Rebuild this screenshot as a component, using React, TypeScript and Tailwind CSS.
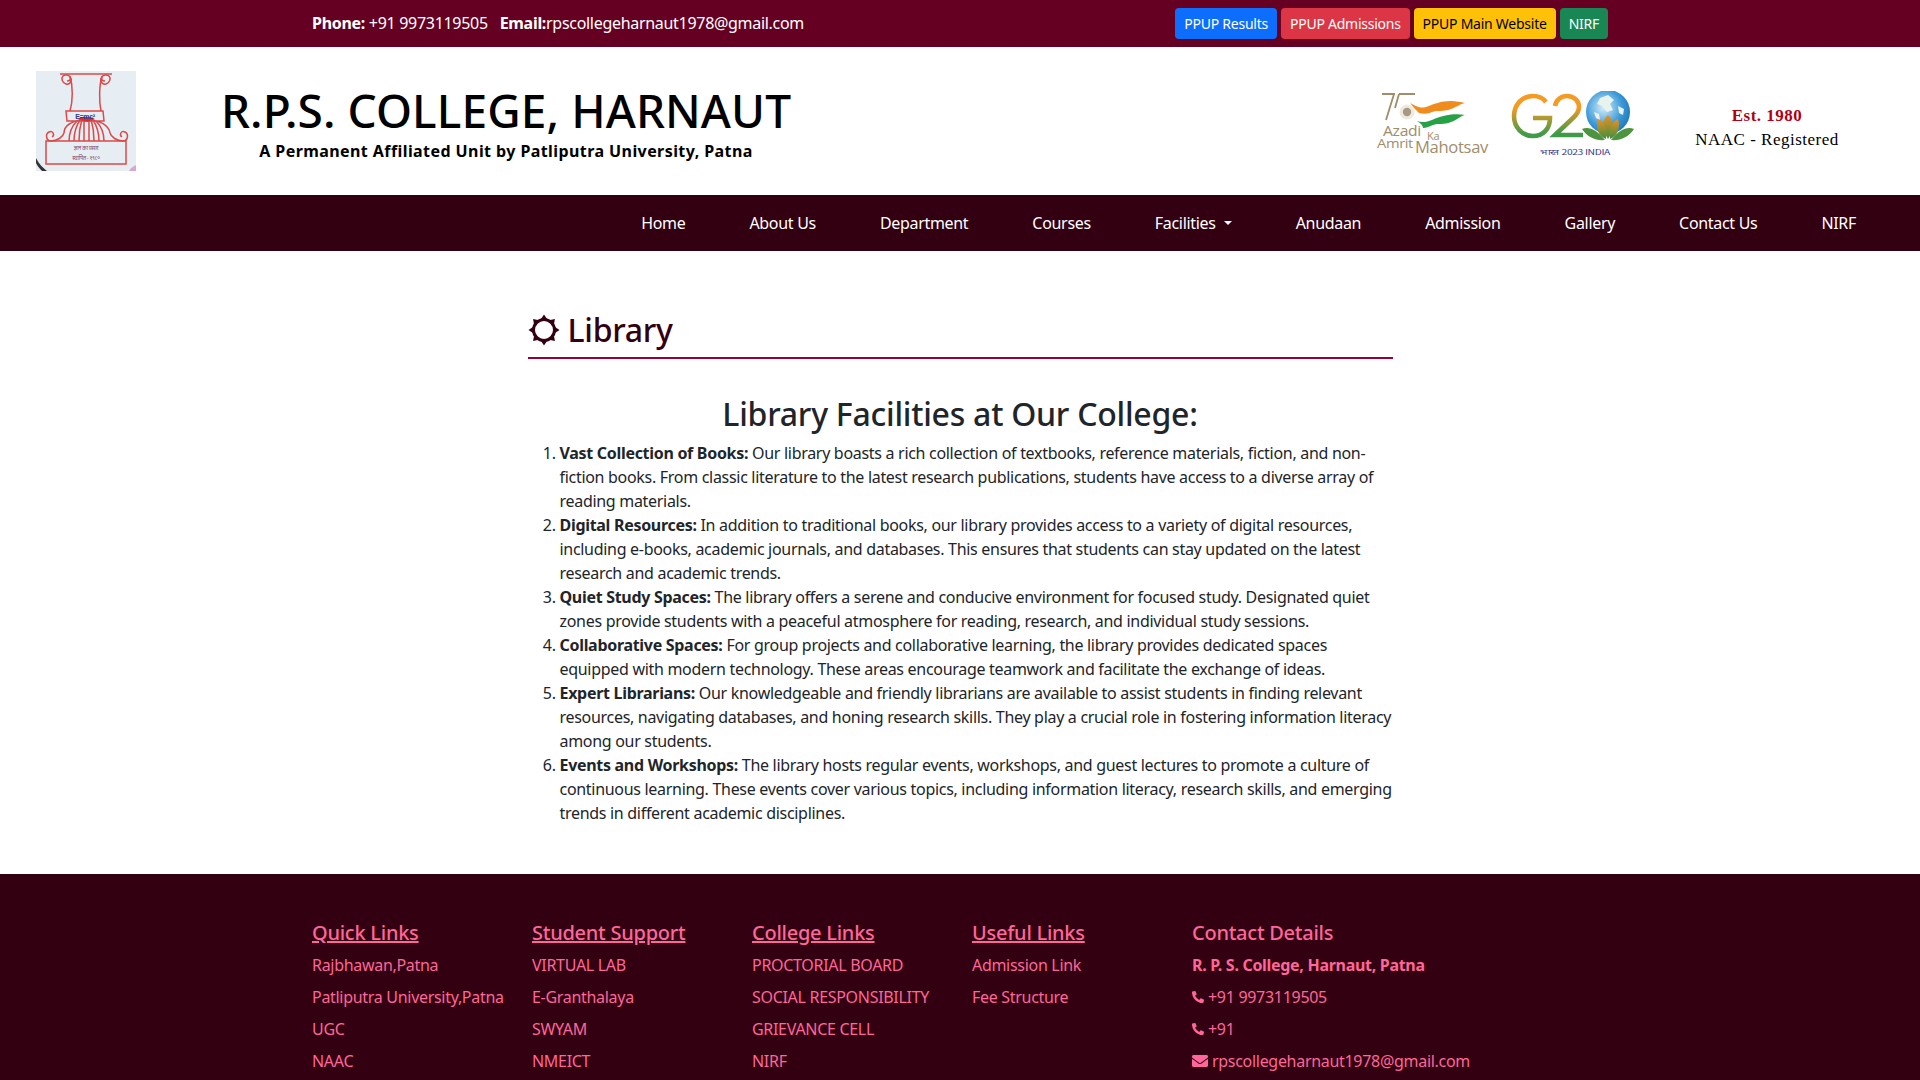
import React from "react";
import { FaPhoneAlt, FaEnvelope } from "react-icons/fa";

function SunIcon() {
  const spikes = [0, 45, 90, 135, 180, 225, 270, 315];
  return (
    <svg width="32" height="32" viewBox="0 0 32 32" className="shrink-0">
      <circle cx="16" cy="16" r="10.5" fill="none" stroke="#330011" strokeWidth="3" />
      {spikes.map((a) => (
        <path key={a} d="M12 6.5L16 0.5L20 6.5z" fill="#330011" transform={`rotate(${a} 16 16)`} />
      ))}
    </svg>
  );
}

function AmritLogo() {
  const f = "Open Sans, sans-serif";
  return (
    <svg width="116" height="64" viewBox="0 0 116 64">
      <path d="M5 1h13M17 1L9 27M22 1h16M22 1l-4 14" fill="none" stroke="#a08d6c" strokeWidth="1.8" />
      <circle cx="30" cy="19" r="7.5" fill="#efe9df" />
      <circle cx="30" cy="19" r="4.2" fill="#a89a80" />
      <path d="M33 10c5 2 9 6 16 4 8-3 15-6 25-6 5 0 10 1 14 2-5 1-8 4-14 6-8 3-14 1-19 3-4 2-8 2-13 1-3-3-6-6-9-10z" fill="#f08c1e" />
      <path d="M40 28c5 2 10 1 15-1 9-4 20-7 33-5-5 1-8 5-14 7-7 3-13 1-18 3-3 1-7 3-10 3 0-3-3-5-6-7z" fill="#27a145" />
      <text x="6" y="43" fontSize="15" textLength="38" lengthAdjust="spacingAndGlyphs" fill="#a08d6c" fontFamily={f}>Azadi</text>
      <text x="50" y="47" fontSize="11" fill="#a08d6c" fontFamily={f}>Ka</text>
      <text x="0" y="55" fontSize="12" textLength="36" lengthAdjust="spacingAndGlyphs" fill="#a08d6c" fontFamily={f}>Amrit</text>
      <text x="38" y="60" fontSize="16" textLength="73" lengthAdjust="spacingAndGlyphs" fill="#a08d6c" fontFamily={f}>Mahotsav</text>
    </svg>
  );
}

function G20Logo() {
  return (
    <svg width="126" height="68" viewBox="0 0 126 68">
      <defs>
        <linearGradient id="g20g" x1="0" y1="0" x2="0" y2="1">
          <stop offset="0.3" stopColor="#f59a23" />
          <stop offset="0.95" stopColor="#3f9b48" />
        </linearGradient>
        <radialGradient id="g20b" cx="0.4" cy="0.4" r="0.7">
          <stop offset="0" stopColor="#d6eefa" />
          <stop offset="0.6" stopColor="#3b9ad8" />
          <stop offset="1" stopColor="#1a6fb5" />
        </radialGradient>
        <linearGradient id="g20l" x1="0" y1="0" x2="0" y2="1">
          <stop offset="0" stopColor="#ef8f22" />
          <stop offset="1" stopColor="#3d8f40" />
        </linearGradient>
      </defs>
      <path d="M36 11c-3-4-8-6-13-6C12 5 4 14 4 25s8 20 19 20c10 0 17-7 17-18H23" fill="none" stroke="url(#g20g)" strokeWidth="4.6" />
      <path d="M45 15c1-6 6-10 12-10 7 0 12 5 12 11 0 4-2 7-5 10L45 44h28" fill="none" stroke="url(#g20g)" strokeWidth="4.6" />
      <circle cx="98" cy="21" r="22" fill="url(#g20b)" />
      <path d="M90 7l8-3 6 5-4 4 3 6-6 2-5-6-5-2zM84 21l5 2 1 6-4-2zM108 15l6 3-1 6-4-2z" fill="#e9f3ee" />
      <path d="M98 24c6 5 7 14 0 24-7-10-6-19 0-24z" fill="url(#g20l)" />
      <path d="M88 28c6 2 9 9 8 20-7-3-11-10-8-20zM108 28c-6 2-9 9-8 20 7-3 11-10 8-20z" fill="url(#g20l)" />
      <path d="M72 38c7-3 15 1 23 11-9 1-18-3-23-11zM124 38c-7-3-15 1-23 11 9 1 18-3 23-11z" fill="#4e9440" />
      <text x="30" y="64" fontSize="8" textLength="70" lengthAdjust="spacingAndGlyphs" fill="#3a3a8c" fontFamily="Noto Sans CJK SC, Liberation Serif, serif">भारत 2023 INDIA</text>
    </svg>
  );
}

function Emblem() {
  return (
    <svg width="100" height="100" viewBox="0 0 100 100">
      <rect width="100" height="100" fill="#e6eef3" />
      <path d="M0 87c3 6 7 10 11 13H6c-3-3-5-6-6-8z" fill="#333" />
      <path d="M95 97l5-3v6h-7z" fill="#d8a8cc" />
      <g fill="none" stroke="#dc4a4a" strokeWidth="1.5">
        <path d="M24 3h52" />
        <path d="M31 10c3 0 4-2 3-4s-5-3-7-1-1 7 3 8 6-3 5-6" />
        <path d="M69 10c-3 0-4-2-3-4s5-3 7-1 1 7-3 8-6-3-5-6" />
        <path d="M34 5c3 10 3 25 0 35M66 5c-3 10-3 25-1 35M30 40h37l1 10H31zM28 62c0-7 6-12 22-14 17 2 23 7 24 14" />
        <path d="M33 70c0-8 3-15 8-20M38 70c0-8 2-15 6-21M43 70c0-8 1-15 3-22M48 70V48M53 70V48M58 70c0-8-1-15-3-22M63 70c0-8-2-15-6-21M68 70c0-8-3-15-8-20" />
        <path d="M28 62c-1 4-7 8-13 8M74 62c1 4 7 8 13 8" />
        <path d="M15 70c-5 0-6-7-2-9s6 3 3 5M87 70c5 0 6-7 2-9s-6 3-3 5" />
        <rect x="10" y="70" width="80" height="23" />
      </g>
      <path d="M42 48c4-3 12-3 17 0l-8 3z" fill="#dc3030" />
      <text x="49" y="48" fontSize="7" fontWeight="700" textAnchor="middle" fill="#2a3a8c" fontFamily="Liberation Sans, sans-serif">E=mc²</text>
      <text x="50" y="79" fontSize="5.5" textAnchor="middle" fill="#7c4a6a" fontFamily="Noto Sans, sans-serif">ज्ञान का प्रसार</text>
      <text x="50" y="89" fontSize="5.5" textAnchor="middle" fill="#7c4a6a" fontFamily="Noto Sans, sans-serif">स्थापित - १९८०</text>
    </svg>
  );
}

const nav = ["Home", "About Us", "Department", "Courses", "Facilities", "Anudaan", "Admission", "Gallery", "Contact Us", "NIRF"];

const items: [string, string, string[]][] = [
  ["Vast Collection of Books:", "Our library boasts a rich collection of textbooks, reference materials, fiction, and non-", ["fiction books. From classic literature to the latest research publications, students have access to a diverse array of", "reading materials."]],
  ["Digital Resources:", "In addition to traditional books, our library provides access to a variety of digital resources,", ["including e-books, academic journals, and databases. This ensures that students can stay updated on the latest", "research and academic trends."]],
  ["Quiet Study Spaces:", "The library offers a serene and conducive environment for focused study. Designated quiet", ["zones provide students with a peaceful atmosphere for reading, research, and individual study sessions."]],
  ["Collaborative Spaces:", "For group projects and collaborative learning, the library provides dedicated spaces", ["equipped with modern technology. These areas encourage teamwork and facilitate the exchange of ideas."]],
  ["Expert Librarians:", "Our knowledgeable and friendly librarians are available to assist students in finding relevant", ["resources, navigating databases, and honing research skills. They play a crucial role in fostering information literacy", "among our students."]],
  ["Events and Workshops:", "The library hosts regular events, workshops, and guest lectures to promote a culture of", ["continuous learning. These events cover various topics, including information literacy, research skills, and emerging", "trends in different academic disciplines."]],
];

const cols: [string, string[]][] = [
  ["Quick Links", ["Rajbhawan,Patna", "Patliputra University,Patna", "UGC", "NAAC"]],
  ["Student Support", ["VIRTUAL LAB", "E-Granthalaya", "SWYAM", "NMEICT"]],
  ["College Links", ["PROCTORIAL BOARD", "SOCIAL RESPONSIBILITY", "GRIEVANCE CELL", "NIRF"]],
  ["Useful Links", ["Admission Link", "Fee Structure"]],
];

export default function App() {
  return (
    <div className="h-[1080px] overflow-hidden bg-white font-['Noto_Sans',sans-serif] text-[16px] leading-6 tracking-[-0.3px] text-[#212529]">
      <div className="flex h-[47px] items-center justify-between bg-[#660022] px-[312px] text-white">
        <div className="-mt-[2px] whitespace-nowrap">
          <b>Phone:</b> +91 9973119505 <span className="ml-2"><b>Email:</b>rpscollegeharnaut1978@gmail.com</span>
        </div>
        <div className="flex gap-1 text-[14px] leading-[21px] tracking-[-0.25px]">
          <a className="rounded bg-[#0d6efd] px-[9px] py-[5px] text-white">PPUP Results</a>
          <a className="rounded bg-[#dc3545] px-[9px] py-[5px] text-white">PPUP Admissions</a>
          <a className="rounded bg-[#ffc107] px-[9px] py-[5px] text-black">PPUP Main Website</a>
          <a className="rounded bg-[#198754] px-[9px] py-[5px] text-white">NIRF</a>
        </div>
      </div>

      <div className="flex h-[148px] items-center pl-9 pr-[80px]">
        <Emblem />
        <div className="ml-[87px] mt-[2px] flex w-[566px] flex-col items-center text-black">
          <div className="whitespace-nowrap text-[46px] font-medium leading-[52px] tracking-[0.1px]">R.P.S. COLLEGE, HARNAUT</div>
          <div className="mt-[5px] whitespace-nowrap text-[16px] font-bold leading-5 tracking-[0.42px]">A Permanent Affiliated Unit by Patliputra University, Patna</div>
        </div>
        <div className="ml-auto mt-[7px] flex items-center gap-[17px]">
          <AmritLogo />
          <G20Logo />
        </div>
        <div className="ml-[58px] mt-[14px] w-[146px] text-center font-['Liberation_Serif',serif] text-[17px] leading-[24px] tracking-[0.5px]">
          <div className="font-bold text-[#b00010]">Est. 1980</div>
          <div className="text-black">NAAC - Registered</div>
        </div>
      </div>

      <nav className="flex h-14 items-center justify-end bg-[#330011] pr-[32px] tracking-[-0.31px] text-white">
        {nav.map((n) => (
          <a key={n} className="flex items-center px-8">
            {n}
            {n === "Facilities" && <span className="ml-2 h-0 w-0 border-x-[4px] border-t-[4px] border-x-transparent border-t-white" />}
          </a>
        ))}
      </nav>

      <main className="mx-auto h-[623px] w-[865px] pt-[56px]">
        <h2 className="flex items-center gap-[8px] border-b-2 border-[#990033] pb-[5px] text-[32px] font-medium leading-[45px] text-[#330011]">
          <SunIcon />
          Library
        </h2>
        <h2 className="mt-[36px] text-center text-[32px] font-medium leading-[38px] tracking-[-0.25px]">Library Facilities at Our College:</h2>
        <ol className="mt-[8px] list-decimal pl-8">
          {items.map(([b, first, rest]) => (
            <li key={b} className="whitespace-nowrap">
              <b>{b}</b> {first}
              {rest.map((r) => (
                <div key={r}>{r}</div>
              ))}
            </li>
          ))}
        </ol>
      </main>

      <footer className="flex h-[400px] bg-[#330011] pl-[312px] pt-[45px] text-[#ff6699]">
        {cols.map(([h, links]) => (
          <div key={h} className="w-[220px]">
            <div className="mb-[6px] text-[20px] font-medium leading-7 tracking-[-0.25px] underline">{h}</div>
            {links.map((l) => (
              <div key={l} className="mb-2 whitespace-nowrap">{l}</div>
            ))}
          </div>
        ))}
        <div className="whitespace-nowrap">
          <div className="mb-[6px] text-[20px] font-medium leading-7 tracking-[-0.25px]">Contact Details</div>
          <div className="mb-2 font-bold">R. P. S. College, Harnaut, Patna</div>
          <div className="mb-2 flex items-center gap-1"><FaPhoneAlt className="h-3 w-3" />+91 9973119505</div>
          <div className="mb-2 flex items-center gap-1"><FaPhoneAlt className="h-3 w-3" />+91</div>
          <div className="mb-2 flex items-center gap-1"><FaEnvelope className="h-4 w-4" />rpscollegeharnaut1978@gmail.com</div>
        </div>
      </footer>
    </div>
  );
}
